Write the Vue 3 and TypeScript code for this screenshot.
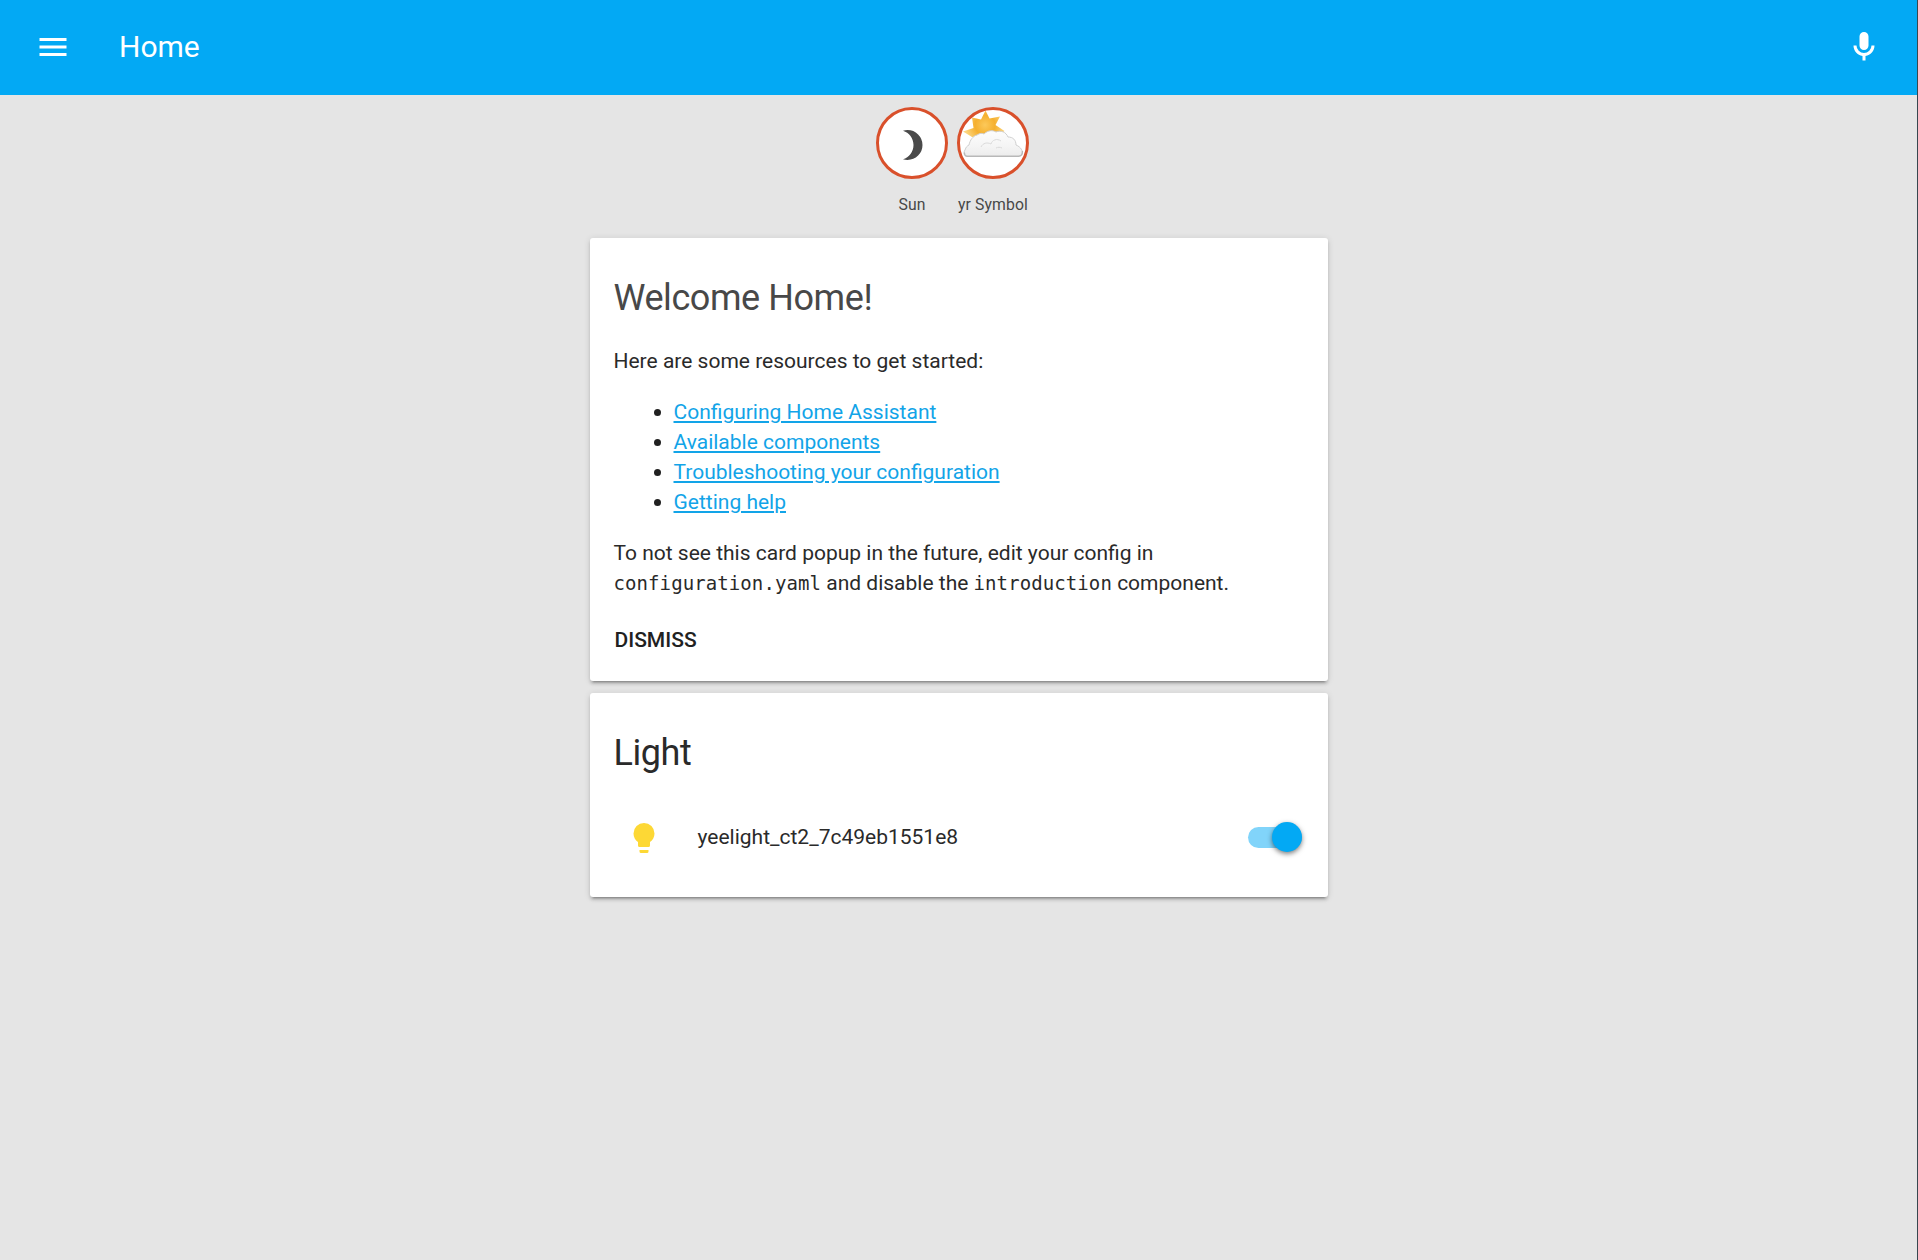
<script setup lang="ts">
interface Resource {
  label: string
}

const resources: Resource[] = [
  { label: 'Configuring Home Assistant' },
  { label: 'Available components' },
  { label: 'Troubleshooting your configuration' },
  { label: 'Getting help' },
]
</script>

<template>
  <div class="page">
    <header class="toolbar">
      <svg class="icon" viewBox="0 0 24 24"><path d="M3 6h18v2H3V6m0 5h18v2H3v-2m0 5h18v2H3v-2z" /></svg>
      <h1 class="title">Home</h1>
      <svg class="icon" viewBox="0 0 24 24">
        <path d="M12 2a3 3 0 0 1 3 3v6a3 3 0 0 1-3 3 3 3 0 0 1-3-3V5a3 3 0 0 1 3-3m7 9c0 3.53-2.61 6.44-6 6.93V21h-2v-3.07c-3.39-.49-6-3.4-6-6.93h2a5 5 0 0 0 5 5 5 5 0 0 0 5-5h2z" />
      </svg>
    </header>

    <section class="badges">
      <div class="badge">
        <div class="circle">
          <svg class="moon" viewBox="0 0 24 24">
            <path d="M9 2C7.95 2 6.95 2.16 6 2.46C10.06 3.73 13 7.5 13 12C13 16.5 10.06 20.27 6 21.54C6.95 21.84 7.95 22 9 22A10 10 0 0 0 19 12A10 10 0 0 0 9 2Z" />
          </svg>
        </div>
        <span class="badge-label">Sun</span>
      </div>
      <div class="badge">
        <div class="circle">
          <svg class="weather" viewBox="0 0 66 66">
            <defs>
              <radialGradient id="sunFill" gradientUnits="userSpaceOnUse" cx="25" cy="15" r="20">
                <stop offset="0" stop-color="#fcc95a" />
                <stop offset=".5" stop-color="#f5b02f" />
                <stop offset="1" stop-color="#fcd57e" />
              </radialGradient>
              <linearGradient id="cloudFill" x1="0" y1="0" x2="0" y2="1">
                <stop offset="0" stop-color="#fdfdfd" />
                <stop offset=".6" stop-color="#f5f5f5" />
                <stop offset="1" stop-color="#ececec" />
              </linearGradient>
            </defs>
            <path fill="url(#sunFill)" d="M25.500 0.500L29.500 8.500L40 6.500L35.500 15L44.500 21L38 27H12L3 21.500L13.500 18L12 7.500L21 9.500Z" />
            <path fill="url(#cloudFill)" stroke="#cfcfcf" stroke-width="1" d="M7 46c-3 0-4-3-2-6 1-3 2-4 4-5 1-5 4-9 8-10 3-2 5-2 7-1 4-4 9-4 12-2 5-2 10 0 12 5 5 0 8 3 8 8 5 2 7 6 6 9-1 2-2 2-4 2z" />
            <path fill="none" stroke="#b8b8b8" stroke-width="1.300" stroke-linecap="round" d="M4.500 43c0 2 1 3.300 3 3.300h51c3 0 4-2 4-5" />
            <path fill="none" stroke="#dadada" stroke-width="1" d="M21 37c2-4 6-5 10-3 1-4 6-6 10-3M36 38c2-1 4-1 6 0" />
          </svg>
        </div>
        <span class="badge-label">yr Symbol</span>
      </div>
    </section>

    <main class="cards">
      <article class="card intro">
        <h2 class="heading soft">Welcome Home!</h2>
        <p>Here are some resources to get started:</p>
        <ul>
          <li v-for="item in resources" :key="item.label"><a href="#">{{ item.label }}</a></li>
        </ul>
        <p>
          To not see this card popup in the future, edit your config in<br />
          <code>configuration.yaml</code> and disable the <code>introduction</code> component.
        </p>
        <button class="dismiss" type="button">DISMISS</button>
      </article>

      <article class="card light">
        <h2 class="heading">Light</h2>
        <div class="row">
          <svg class="icon bulb" viewBox="0 0 24 24">
            <path d="M12 2a7 7 0 0 0-7 7c0 2.380 1.190 4.470 3 5.740V17a1 1 0 0 0 1 1h6a1 1 0 0 0 1-1v-2.260c1.810-1.270 3-3.360 3-5.740a7 7 0 0 0-7-7M9 21a1 1 0 0 0 1 1h4a1 1 0 0 0 1-1v-1H9v1z" />
          </svg>
          <span class="name">yeelight_ct2_7c49eb1551e8</span>
          <span class="toggle"><span class="knob"></span></span>
        </div>
      </article>
    </main>
  </div>
</template>

<style>
body {
  background: #e5e5e5;
}
</style>

<style scoped>
.page {
  box-sizing: border-box;
  height: 1260px;
  overflow: hidden;
  background: #e5e5e5;
  border-right: 1px solid #37474f;
  color: #2a2a2a;
  font-family: Roboto, sans-serif;
  font-size: 21px;
  line-height: 30px;
}

.toolbar {
  box-sizing: border-box;
  height: 95px;
  padding: 0 35px 1px 35px;
  display: flex;
  align-items: center;
  background: #03a9f4;
  color: #fff;
}

.icon {
  width: 36px;
  height: 36px;
  flex: none;
  fill: currentColor;
}

.title {
  flex: 1;
  margin: 0 0 0 48px;
  font-size: 30px;
  font-weight: 400;
}

.badges {
  display: flex;
  justify-content: center;
  gap: 9px;
  height: 131px;
  padding: 12px 12px 0 0;
  box-sizing: border-box;
}

.badge {
  width: 72px;
  display: flex;
  flex-direction: column;
  align-items: center;
}

.circle {
  box-sizing: border-box;
  width: 72px;
  height: 72px;
  display: flex;
  align-items: center;
  justify-content: center;
  border: 3px solid #d9502b;
  border-radius: 50%;
  background: #fff;
  overflow: hidden;
}

.moon {
  width: 36px;
  height: 36px;
  margin: 3px 0 0;
  fill: #4a4a4a;
}

.weather {
  width: 66px;
  height: 66px;
}

.badge-label {
  margin-top: 14px;
  font-size: 15.75px;
  letter-spacing: 0.1px;
  line-height: 24px;
  white-space: nowrap;
  color: #484848;
}

.cards {
  width: 738px;
  margin: 12px auto 0;
  display: flex;
  flex-direction: column;
  gap: 12px;
}

.card {
  box-sizing: border-box;
  padding: 36px 24px 0;
  border-radius: 3px;
  background: #fff;
  box-shadow: 0 3px 3px rgba(0, 0, 0, 0.14), 0 1px 7px rgba(0, 0, 0, 0.12), 0 4px 2px -3px rgba(0, 0, 0, 0.3);
}

.intro {
  height: 443px;
}

.light {
  height: 204px;
}

.heading {
  margin: 0 0 24px;
  font-size: 36px;
  line-height: 48px;
  font-weight: 400;
  letter-spacing: -0.012em;
}

.soft {
  color: #484848;
}

p {
  margin: 21px 0;
}

ul {
  margin: 0 0 21px;
  padding-left: 40px;
  list-style: none;
}

li {
  display: flex;
  align-items: center;
}

li::before {
  content: '';
  width: 7px;
  height: 7px;
  margin-right: 13px;
  border-radius: 50%;
  background: #212121;
}

a {
  color: #12a4e8;
}

code {
  font-family: "DejaVu Sans Mono", monospace;
  font-size: 19px;
  letter-spacing: 0.09px;
  line-height: 1;
}

.dismiss {
  display: block;
  margin: 27px 0 0 1px;
  padding: 0;
  border: 0;
  background: none;
  color: #212121;
  font: 500 21px/30px Roboto, sans-serif;
}

.row {
  display: flex;
  align-items: center;
  height: 60px;
  margin-top: 30px;
  padding-left: 12px;
}

.bulb {
  margin-top: 1px;
  fill: #fdd835;
}

.name {
  flex: 1;
  margin-left: 36px;
}

.toggle {
  display: flex;
  align-items: center;
  justify-content: flex-end;
  width: 54px;
  height: 21px;
  border-radius: 11px;
  background: #81d4fa;
  margin-right: 2px;
}

.knob {
  flex: none;
  width: 30px;
  height: 30px;
  border-radius: 50%;
  background: #03a9f4;
  box-shadow: 0 2px 5px rgba(0, 0, 0, 0.5);
}
</style>
